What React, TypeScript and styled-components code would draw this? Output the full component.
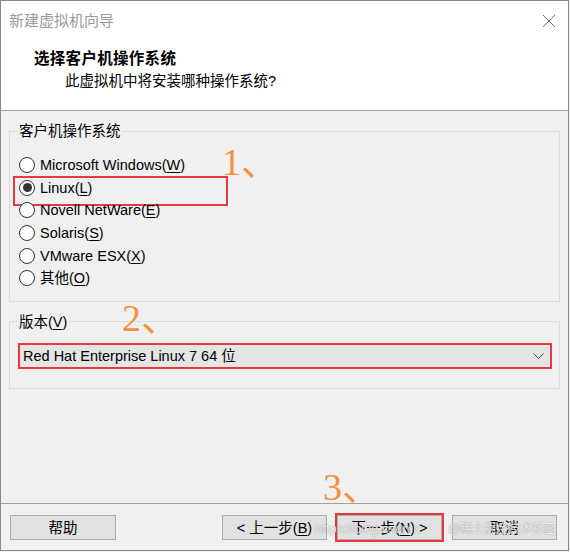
import React from 'react';
import styled, { createGlobalStyle, css } from 'styled-components';

const UI_FONT = `"Liberation Sans", "Noto Sans CJK SC", sans-serif`;

const GlobalStyle = createGlobalStyle`
  html, body { margin: 0; padding: 0; background: #f0f0f0; }
  body { font-family: ${UI_FONT}; font-size: 14.5px; color: #000; }
  * { box-sizing: border-box; }
`;

const Window = styled.div`
  position: relative;
  width: 569px;
  height: 551px;
  border: 1px solid #8a8a8a;
  display: flex;
  flex-direction: column;
  background: #f0f0f0;
  font-family: ${UI_FONT};
  font-size: 14.5px;
  overflow: hidden;
`;

const TitleBar = styled.div`
  height: 40px;
  flex: none;
  background: #fff;
  display: flex;
  align-items: center;
  justify-content: space-between;
  padding: 0 12px 0 8px;
`;

const TitleText = styled.span`
  color: #9a9a9a;
  font-size: 15px;
  line-height: 20px;
`;

const CloseButton = styled.span`
  width: 14px;
  height: 14px;
  display: flex;
`;

const Header = styled.div`
  height: 70px;
  flex: none;
  background: #fff;
  border-bottom: 1px solid #a0a0a0;
  padding: 8px 0 0 33px;
  display: flex;
  flex-direction: column;
`;

const Heading = styled.h1`
  margin: 0;
  font-size: 15.5px;
  font-weight: bold;
  line-height: 20px;
  letter-spacing: 0.3px;
`;

const SubHeading = styled.p`
  margin: 2px 0 0 31px;
  font-size: 14.5px;
  line-height: 20px;
`;

const Body = styled.div`
  flex: 1;
  padding: 10px 8px 0 8px;
  display: flex;
  flex-direction: column;
  gap: 10px;
`;

const GroupBox = styled.fieldset<{ $padTop: number; $padBottom: number }>`
  margin: 0;
  min-inline-size: 0;
  border: 1px solid #dcdcdc;
  padding: ${(p) => p.$padTop}px 7px ${(p) => p.$padBottom}px 7px;
`;

const GroupLegend = styled.legend`
  padding: 0 2px;
  line-height: 20px;
  font-size: 14.5px;
`;

const RadioRow = styled.label<{ $highlight?: boolean }>`
  position: relative;
  display: flex;
  align-items: center;
  gap: 5px;
  height: 22.6px;
  padding-left: 2px;
  line-height: 20px;
  ${(p) =>
    p.$highlight &&
    css`
      &::after {
        content: '';
        position: absolute;
        left: -4px;
        top: -1px;
        width: 211px;
        height: 26px;
        border: 2px solid #e6393f;
        pointer-events: none;
      }
    `}
`;

const RadioCircle = styled.span<{ $checked?: boolean }>`
  width: 16px;
  height: 16px;
  flex: none;
  border-radius: 50%;
  border: 1px solid #333;
  background: #fff;
  display: flex;
  align-items: center;
  justify-content: center;
  &::before {
    content: '';
    width: 9px;
    height: 9px;
    border-radius: 50%;
    background: ${(p) => (p.$checked ? '#333' : 'transparent')};
  }
`;

const Mnemonic = styled.u`
  text-underline-offset: 2px;
`;

const Select = styled.div<{ $highlight?: boolean }>`
  height: 26px;
  margin: 1px 0 0 1px;
  background: #e5e5e5;
  border: ${(p) => (p.$highlight ? '2px solid #e6393f' : '1px solid #adadad')};
  display: flex;
  align-items: center;
  justify-content: space-between;
  padding: 0 6px 0 3px;
  line-height: 20px;
`;

const Footer = styled.div`
  flex: none;
  height: 47px;
  border-top: 1px solid #a0a0a0;
  padding: 11px 11px 0 9px;
  display: flex;
  align-items: flex-start;
`;

const NavGroup = styled.div`
  margin-left: auto;
  display: flex;
  gap: 10px;
`;

const Button = styled.button<{ $width?: number; $highlight?: boolean }>`
  width: ${(p) => p.$width ?? 105}px;
  height: 25px;
  padding: 0;
  background: #e1e1e1;
  border: 1px solid #adadad;
  font-family: ${UI_FONT};
  font-size: 14.5px;
  color: #000;
  line-height: 20px;
  ${(p) =>
    p.$highlight &&
    css`
      outline: 2px solid #e6393f;
      outline-offset: 0;
    `}
`;

const Annotation = styled.span<{ $top: number; $left: number }>`
  position: absolute;
  top: ${(p) => p.$top}px;
  left: ${(p) => p.$left}px;
  font-family: "Liberation Serif", "Noto Sans CJK SC", serif;
  font-size: 38px;
  line-height: 1;
  color: #f39240;
  pointer-events: none;
`;

const Watermark = styled.span<{ $left: number; $size: number }>`
  position: absolute;
  top: 519px;
  left: ${(p) => p.$left}px;
  font-size: ${(p) => p.$size}px;
  line-height: 18px;
  color: rgba(255, 255, 255, 0.85);
  text-shadow: 0 0 1px rgba(0, 0, 0, 0.35), 0 0 2px rgba(0, 0, 0, 0.15);
  pointer-events: none;
  white-space: nowrap;
`;

const options: { label: string; key: string; checked?: boolean }[] = [
  { label: 'Microsoft Windows', key: 'W' },
  { label: 'Linux', key: 'L', checked: true },
  { label: 'Novell NetWare', key: 'E' },
  { label: 'Solaris', key: 'S' },
  { label: 'VMware ESX', key: 'X' },
  { label: '其他', key: 'O' },
];

export default function App() {
  return (
    <>
      <GlobalStyle />
      <Window>
        <TitleBar>
          <TitleText>新建虚拟机向导</TitleText>
          <CloseButton>
            <svg width="14" height="14" viewBox="0 0 14 14">
              <path d="M1 1 L13 13 M13 1 L1 13" stroke="#6e6e6e" strokeWidth="1" fill="none" />
            </svg>
          </CloseButton>
        </TitleBar>
        <Header>
          <Heading>选择客户机操作系统</Heading>
          <SubHeading>此虚拟机中将安装哪种操作系统?</SubHeading>
        </Header>
        <Body>
          <GroupBox $padTop={13} $padBottom={11}>
            <GroupLegend>客户机操作系统</GroupLegend>
            {options.map((o) => (
              <RadioRow key={o.key} $highlight={o.checked}>
                <RadioCircle $checked={o.checked} />
                <span>
                  {o.label}(<Mnemonic>{o.key}</Mnemonic>)
                </span>
              </RadioRow>
            ))}
          </GroupBox>
          <GroupBox $padTop={10} $padBottom={19}>
            <GroupLegend>
              版本(<Mnemonic>V</Mnemonic>)
            </GroupLegend>
            <Select $highlight>
              <span>Red Hat Enterprise Linux 7 64 位</span>
              <svg width="11" height="6" viewBox="0 0 11 6">
                <path d="M0.5 0.5 L5.5 5.5 L10.5 0.5" stroke="#444" strokeWidth="1" fill="none" />
              </svg>
            </Select>
          </GroupBox>
        </Body>
        <Footer>
          <Button $width={106}>帮助</Button>
          <NavGroup>
            <Button>
              &lt; 上一步(<Mnemonic>B</Mnemonic>)
            </Button>
            <Button $highlight>
              下一步(<Mnemonic>N</Mnemonic>) &gt;
            </Button>
            <Button>取消</Button>
          </NavGroup>
        </Footer>
        <Annotation $top={142} $left={221}>1、</Annotation>
        <Annotation $top={298} $left={121}>2、</Annotation>
        <Annotation $top={467} $left={322}>3、</Annotation>
        <Watermark $left={314} $size={13}>https://blog.csdn.n</Watermark>
        <Watermark $left={447} $size={12}>@稀土掘金技术社区</Watermark>
      </Window>
    </>
  );
}
